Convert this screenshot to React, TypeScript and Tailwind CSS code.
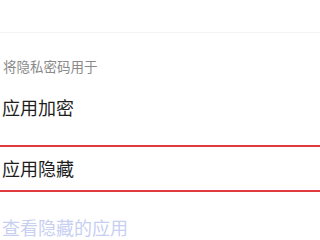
import React from 'react';

const App: React.FC = () => {
  return (
    <div
      className="w-[320px] h-[240px] overflow-hidden bg-white"
      style={{ fontFamily: '"Noto Sans CJK SC", "Noto Sans", sans-serif' }}
    >
      <div className="h-[33px] border-b border-[#f4f4f4]" />
      <div className="pl-[3px] pt-[24px] text-[13.5px] leading-[18px] text-[#8a8a8a]">将隐私密码用于</div>
      <div className="pl-[2px] pt-[20px] text-[18px] leading-[24px] text-[#1e1e1e]">应用加密</div>
      <div className="mt-[26px] h-[47px] border-y-[2px] border-[#df3a3f] flex items-center pl-[2px] text-[18px] text-[#1e1e1e]">
        应用隐藏
      </div>
      <div className="pl-[2px] pt-[23px] text-[18px] leading-[24px] text-[#c8d0f2]">查看隐藏的应用</div>
    </div>
  );
};

export default App;
